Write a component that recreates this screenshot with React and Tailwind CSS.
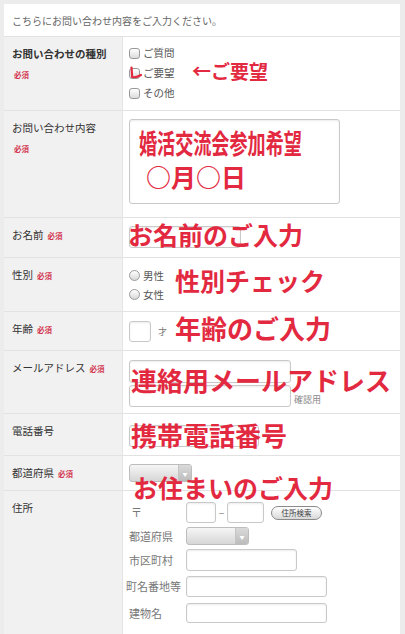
import React from "react";

const font = { fontFamily: '"Noto Sans CJK JP", "Noto Sans", sans-serif' };

const Req = ({ className = "" }) => (
    <span className={`text-[7.5px] font-bold text-[#d3354f] ${className}`}>必須</span>
);

const Note = ({ children, className = "" }) => (
    <div className={`absolute z-10 whitespace-nowrap font-bold leading-none text-[#e2293f] ${className}`}>
        {children}
    </div>
);

const Checkbox = () => (
    <span className="inline-block w-[11px] h-[11px] rounded-[3px] border border-[#9a9a9a] bg-gradient-to-b from-white to-[#dcdcdc] shrink-0" />
);

const Radio = () => (
    <span className="inline-block w-[11px] h-[11px] rounded-full border border-[#9a9a9a] bg-gradient-to-b from-white to-[#d8d8d8] shrink-0" />
);

const Input = ({ className = "" }) => (
    <div className={`border border-[#c9c9c9] rounded-[3px] bg-white shadow-[inset_0_1px_2px_rgba(0,0,0,0.08)] ${className}`} />
);

const Select = ({ className = "" }) => (
    <div className={`flex border border-[#bdbdbd] rounded-[3px] overflow-hidden bg-gradient-to-b from-[#f6f6f6] to-[#d6d6d6] ${className}`}>
        <div className="flex-1" />
        <div className="w-[13px] flex items-center justify-center bg-gradient-to-b from-[#dadada] to-[#bcbcbc] border-l border-[#c4c4c4]">
            <span className="text-[5px] text-white leading-none">▼</span>
        </div>
    </div>
);

const Row = ({ label, req, reqBelow, bold, h, children }) => (
    <div className={`flex border-t border-[#e2e2e2] ${h}`}>
        <div className="w-[119px] shrink-0 bg-[#f1f1f1] border-r border-[#e4e4e4] px-2 pt-[9px]">
            <div className={`text-[10.5px] leading-4 text-[#333] ${bold ? "font-bold" : ""}`}>
                {label}
                {req && !reqBelow && <Req className="ml-1" />}
            </div>
            {req && reqBelow && (
                <div className="pl-[2px] mt-[3px] leading-3">
                    <Req />
                </div>
            )}
        </div>
        <div className="relative flex-1 bg-white pl-[6px]">{children}</div>
    </div>
);

export default function App() {
    return (
        <div className="w-[405px] h-[634px] overflow-hidden bg-[#ececec] pl-1 pt-1 pr-[5px]" style={font}>
            <div className="bg-white h-full flex flex-col">
                {/* Header */}
                <div className="h-[32px] flex items-center px-2 text-[10px] text-[#666]">
                    こちらにお問い合わせ内容をご入力ください。
                </div>

                <Row label="お問い合わせの種別" req reqBelow bold h="h-[74px]">
                    <div className="pt-[6px] text-[10.5px] text-[#555]">
                        <div className="h-5 flex items-center gap-[3px]">
                            <Checkbox />ご質問
                        </div>
                        <div className="relative h-5 flex items-center gap-[3px]">
                            <Checkbox />ご要望
                            <svg className="absolute left-0 top-[3px]" width="14" height="14" viewBox="0 0 14 14">
                                <path d="M2.5 1.5 L3.2 11 Q7 12 12 9" fill="none" stroke="#e2293f" strokeWidth="2.2" strokeLinecap="round" />
                            </svg>
                        </div>
                        <div className="h-5 flex items-center gap-[3px]">
                            <Checkbox />その他
                        </div>
                    </div>
                    <Note className="left-[69px] top-[24px] text-[19px]">←ご要望</Note>
                </Row>

                <Row label="お問い合わせ内容" req reqBelow h="h-[107px]">
                    <div className="pt-2">
                        <Input className="w-[211px] h-[85px]" />
                    </div>
                    <Note className="left-[16px] top-[18px] text-[27px] scale-x-[0.67] origin-left">婚活交流会参加希望</Note>
                    <Note className="left-[23px] top-[53px] text-[25px]">○月○日</Note>
                </Row>

                <Row label="お名前" req h="h-[40px]">
                    <div className="pt-2">
                        <Input className="w-[112px] h-[22px]" />
                    </div>
                    <Note className="left-[5px] top-[4px] text-[25px]">お名前のご入力</Note>
                </Row>

                <Row label="性別" req h="h-[54px]">
                    <div className="pt-2 text-[10.5px] text-[#555]">
                        <div className="h-[19px] flex items-center gap-[3px]">
                            <Radio />男性
                        </div>
                        <div className="h-[19px] flex items-center gap-[3px]">
                            <Radio />女性
                        </div>
                    </div>
                    <Note className="left-[52px] top-[10px] text-[25px]">性別チェック</Note>
                </Row>

                <Row label="年齢" req h="h-[39px]">
                    <div className="pt-[9px] flex items-center gap-[7px]">
                        <Input className="w-[22px] h-[21px]" />
                        <span className="text-[9px] text-[#777]">才</span>
                    </div>
                    <Note className="left-[52px] top-[3px] text-[26px]">年齢のご入力</Note>
                </Row>

                <Row label="メールアドレス" req h="h-[63px]">
                    <div className="pt-[9px] flex flex-col gap-[2px]">
                        <Input className="w-[162px] h-[23px]" />
                        <div className="flex items-end gap-[3px]">
                            <Input className="w-[162px] h-[22px]" />
                            <span className="text-[9px] text-[#888] leading-3 mb-[1px]">確認用</span>
                        </div>
                    </div>
                    <Note className="left-[8px] top-[16px] text-[26px]">連絡用メールアドレス</Note>
                </Row>

                <Row label="電話番号" h="h-[42px]">
                    <div className="pt-[11px]">
                        <Input className="w-[130px] h-[22px]" />
                    </div>
                    <Note className="left-[8px] top-[8px] text-[26px]">携帯電話番号</Note>
                </Row>

                <Row label="都道府県" req h="h-[35px]">
                    <div className="pt-2">
                        <Select className="w-[63px] h-[18px]" />
                    </div>
                    <Note className="left-[10px] top-[19px] text-[25px]">お住まいのご入力</Note>
                </Row>

                <Row label="住所" h="flex-1">
                    <div className="pt-[11px] text-[11px] text-[#777] grid grid-cols-[57px_auto] items-center justify-start">
                        <span className="pl-[2px]">〒</span>
                        <div className="flex items-center h-[21px]">
                            <Input className="w-[30px] h-[21px]" />
                            <span className="w-[11px] text-center text-[10px] text-[#888]">−</span>
                            <Input className="w-[37px] h-[21px]" />
                            <div className="ml-[7px] w-[51px] h-[14px] rounded-full border border-[#8a8a8a] bg-gradient-to-b from-white to-[#d9d9d9] flex items-center justify-center text-[7.5px] text-[#444] leading-none">
                                住所検索
                            </div>
                        </div>

                        <span className="mt-1">都道府県</span>
                        <Select className="mt-1 w-[63px] h-[18px]" />

                        <span className="mt-1">市区町村</span>
                        <Input className="mt-1 w-[111px] h-[22px]" />

                        <span className="mt-[5px] -ml-[3px]">町名番地等</span>
                        <Input className="mt-[5px] w-[141px] h-[21px]" />

                        <span className="mt-[6px]">建物名</span>
                        <Input className="mt-[6px] w-[141px] h-[20px]" />
                    </div>
                </Row>
            </div>
        </div>
    );
}
